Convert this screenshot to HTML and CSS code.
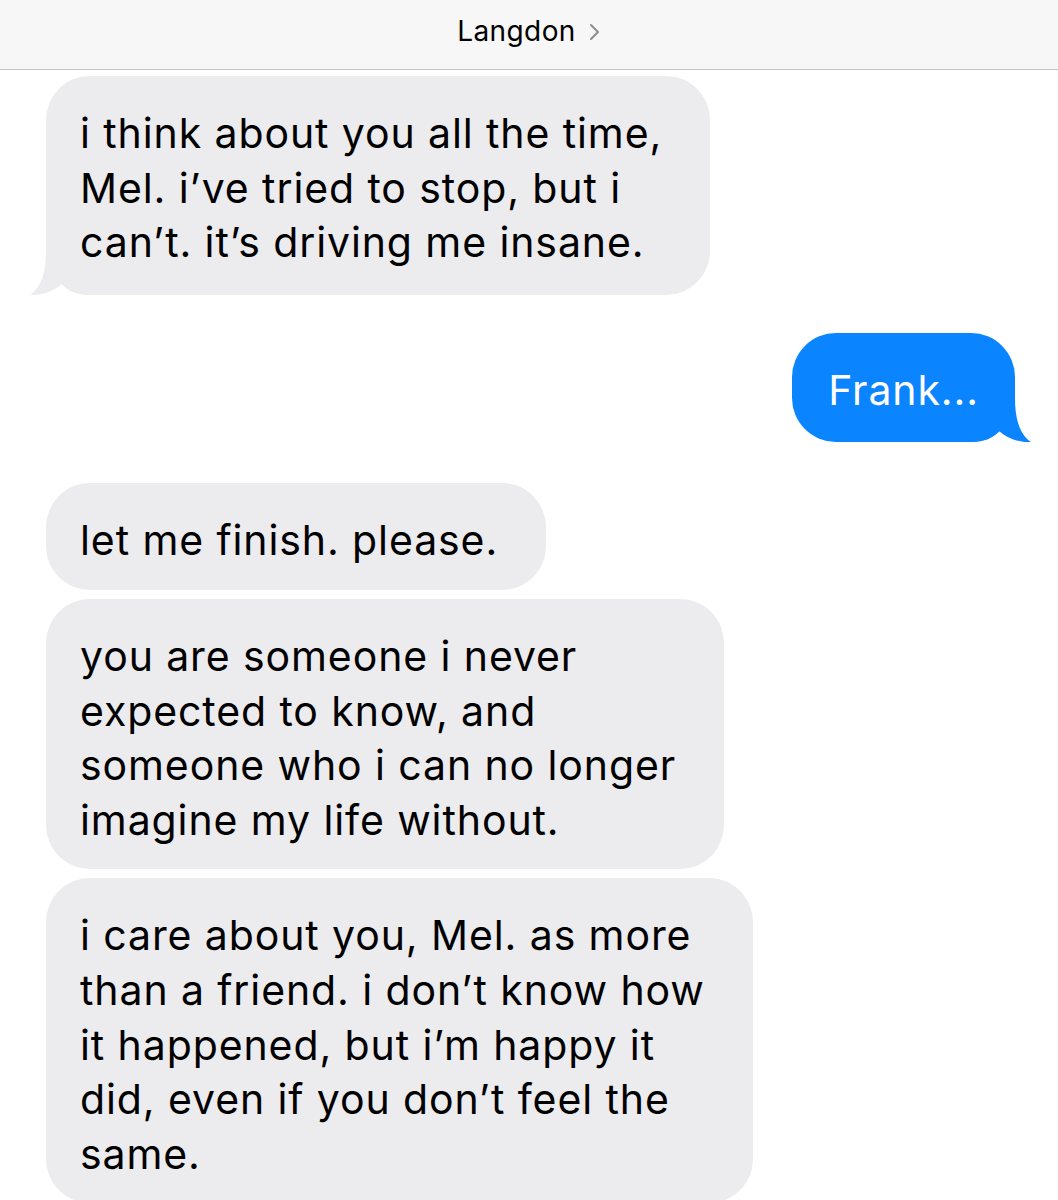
FILE: index.html
```html
<!DOCTYPE html>
<html lang="en">
<head>
    <meta charset="UTF-8">
    <meta name="viewport" content="width=device-width, initial-scale=1.0">
    <title>Langdon</title>
    <link rel="stylesheet" href="styles.css">
</head>
<body>
    <header class="topbar">
        <span class="contact">Langdon</span>
        <svg class="chevron" width="12" height="18" viewBox="0 0 12 18">
            <path d="M2 2 L9 9 L2 16" fill="none" stroke="#8e8e93" stroke-width="2" stroke-linecap="round" stroke-linejoin="round"/>
        </svg>
    </header>

    <main class="thread">
        <div class="msg in tail first">
            i think about you all the time,<br>
            Mel. i’ve tried to stop, but i<br>
            can’t. it’s driving me insane.
            <svg class="tail-in" width="60" height="50" viewBox="0 0 60 50">
                <path d="M16 0 L16 6 C16 30 10 43 0 50 C12 51 24 46 32 39 C38 46 46 50 60 50 L60 0 Z" fill="#ececef"/>
            </svg>
        </div>

        <div class="msg out tail gap-out">
            Frank...
            <svg class="tail-out" width="60" height="50" viewBox="0 0 60 50">
                <path d="M44 0 L44 6 C44 30 50 43 60 50 C48 51 36 46 28 39 C22 46 14 50 0 50 L0 0 Z" fill="#0a84ff"/>
            </svg>
        </div>

        <div class="msg in gap-in">let me finish. please.</div>

        <div class="msg in">
            you are someone i never<br>
            expected to know, and<br>
            someone who i can no longer<br>
            imagine my life without.
        </div>

        <div class="msg in">
            i care about you, Mel. as more<br>
            than a friend. i don’t know how<br>
            it happened, but i’m happy it<br>
            did, even if you don’t feel the<br>
            same.
        </div>
    </main>
</body>
</html>
```

FILE: styles.css
```css
body {
    margin: 0;
    background: #fff;
    font-family: Inter, "Open Sans", sans-serif;
    color: #000;
    overflow: hidden;
}
.topbar {
    height: 70px;
    display: flex;
    align-items: center;
    justify-content: center;
    gap: 13px;
    background: #f7f7f7;
    border-bottom: 1px solid #c4c4c4;
    padding-bottom: 8px;
    box-sizing: border-box;
}
.contact {
    font-size: 28px;
    letter-spacing: 0.4px;
}
.chevron {
    margin-top: 3px;
}
.thread {
    display: flex;
    flex-direction: column;
    padding: 6px 43px 0 46px;
}
.msg {
    position: relative;
    isolation: isolate;
    align-self: flex-start;
    padding: 30px 48px 22px 34px;
    font-size: 41px;
    line-height: 54.6px;
    letter-spacing: 0.9px;
    white-space: nowrap;
    border-radius: 44px;
    background: #ececef;
}
.msg.first {
    padding-bottom: 25px;
}
.msg + .msg {
    margin-top: 9px;
}
.msg.out {
    align-self: flex-end;
    padding: 30px 36px 25px;
    background: #0a84ff;
    color: #fff;
}
.msg.gap-out {
    margin-top: 38px;
}
.msg.gap-in {
    margin-top: 41px;
}
.tail-in,
.tail-out {
    position: absolute;
    bottom: 0;
    z-index: -1;
}
.tail-in {
    left: -16px;
}
.tail-out {
    right: -16px;
}
```
